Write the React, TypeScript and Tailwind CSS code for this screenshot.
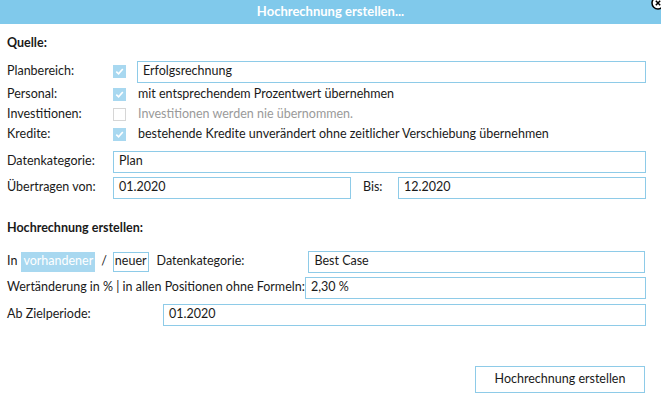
const Check = ({ on }: { on: boolean }) => (
  <span className={`flex h-[13px] w-[13px] items-center justify-center ${on ? "bg-[#a8d8f0]" : "border border-[#d6d6d6] bg-white"}`}>
    {on && (
      <svg viewBox="0 0 12 12" className="h-[11px] w-[11px]">
        <path d="M2.5 6.2 L5 8.6 L9.6 3.2" fill="none" stroke="white" strokeWidth="1.8" />
      </svg>
    )}
  </span>
);

const Field = ({ value, className }: { value: string; className: string }) => (
  <div className={`flex h-[22px] items-center border border-[#8ecbe8] px-[5px] ${className}`}>{value}</div>
);

export default function App() {
  return (
    <div className="relative h-[404px] w-[661px] overflow-hidden whitespace-nowrap bg-white text-[12.5px] text-[#1a1a1a]" style={{ fontFamily: 'Lato, "Noto Sans", sans-serif' }}>
      <div className="flex h-[24px] items-center justify-center bg-[#80c9eb] text-[13px] font-bold text-white">
        Hochrechnung erstellen...
      </div>
      <svg viewBox="0 0 14 14" className="absolute right-[-4px] top-[-4px] h-[14px] w-[14px]">
        <circle cx="7" cy="7" r="6" fill="white" stroke="black" strokeWidth="1.5" />
        <path d="M4.8 4.8 L9.2 9.2 M9.2 4.8 L4.8 9.2" stroke="black" strokeWidth="1.5" />
      </svg>

      <div className="px-[7px]">
        <div className="mt-[10px] font-bold">Quelle:</div>

        <div className="mt-[8px] flex h-[22px] items-center">
          <span className="w-[106px]">Planbereich:</span>
          <Check on />
          <Field value="Erfolgsrechnung" className="ml-[11px] w-[509px]" />
        </div>
        <div className="mt-[2px] flex h-[20px] items-center">
          <span className="w-[106px]">Personal:</span>
          <Check on />
          <span className="ml-[12px]">mit entsprechendem Prozentwert übernehmen</span>
        </div>
        <div className="flex h-[20px] items-center">
          <span className="w-[106px]">Investitionen:</span>
          <Check on={false} />
          <span className="ml-[12px] text-[#9a9a9a]">Investitionen werden nie übernommen.</span>
        </div>
        <div className="flex h-[20px] items-center">
          <span className="w-[106px]">Kredite:</span>
          <Check on />
          <span className="ml-[12px]">bestehende Kredite unverändert ohne zeitlicher Verschiebung übernehmen</span>
        </div>

        <div className="mt-[6px] flex items-center">
          <span className="w-[106px]">Datenkategorie:</span>
          <Field value="Plan" className="w-[533px]" />
        </div>
        <div className="mt-[4px] flex items-center">
          <span className="w-[106px]">Übertragen von:</span>
          <Field value="01.2020" className="w-[238px]" />
          <span className="ml-[12px] w-[35px]">Bis:</span>
          <Field value="12.2020" className="w-[248px]" />
        </div>

        <div className="mt-[20px] font-bold">Hochrechnung erstellen:</div>

        <div className="mt-[13px] flex items-center">
          <span>In</span>
          <span className="ml-[4px] flex h-[20px] items-center bg-[#a8d8f0] px-[2px] text-white">vorhandener</span>
          <span className="mx-[6px]">/</span>
          <span className="flex h-[20px] items-center border border-[#8ecbe8] px-[1px]">neuer</span>
          <span className="ml-[8px] w-[154px]">Datenkategorie:</span>
          <Field value="Best Case" className="ml-auto mr-[9px] w-[341px]" />
        </div>
        <div className="mt-[4px] flex items-center">
          <span className="w-[298px]">Wertänderung in % | in allen Positionen ohne Formeln:</span>
          <Field value="2,30 %" className="w-[341px]" />
        </div>
        <div className="mt-[5px] flex items-center">
          <span className="w-[156px]">Ab Zielperiode:</span>
          <Field value="01.2020" className="w-[483px]" />
        </div>

        <div className="mt-[40px] flex justify-end pr-[9px]">
          <div className="flex h-[27px] w-[170px] items-center justify-center border border-[#8ecbe8]">Hochrechnung erstellen</div>
        </div>
      </div>
    </div>
  );
}
